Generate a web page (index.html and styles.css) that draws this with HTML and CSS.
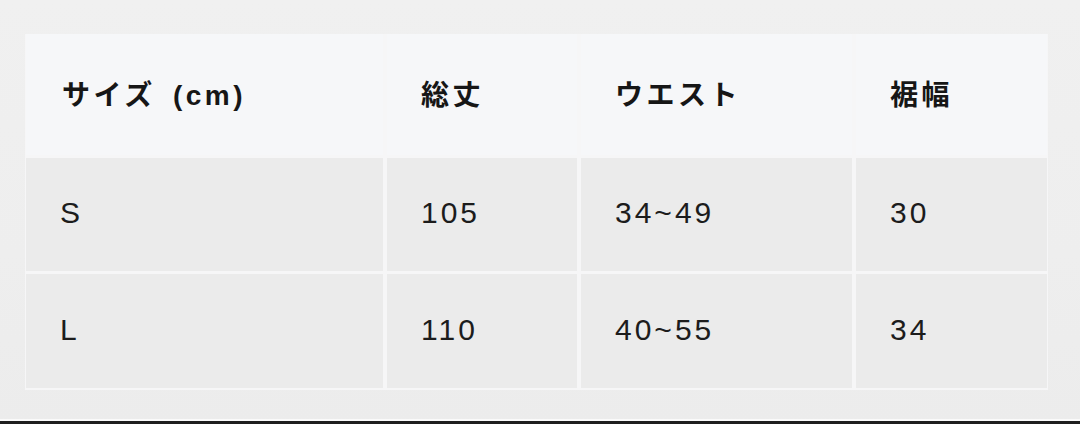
FILE: index.html
```html
<!DOCTYPE html>
<html lang="ja">
<head>
<meta charset="utf-8">
<link rel="stylesheet" href="styles.css">
</head>
<body>
<div class="page">
  <div class="size-table">
    <div class="cell head">サイズ (cm)</div>
    <div class="cell head">総丈</div>
    <div class="cell head">ウエスト</div>
    <div class="cell head">裾幅</div>

    <div class="cell">S</div>
    <div class="cell">105</div>
    <div class="cell">34~49</div>
    <div class="cell">30</div>

    <div class="cell">L</div>
    <div class="cell">110</div>
    <div class="cell">40~55</div>
    <div class="cell">34</div>
  </div>
</div>
<div class="bottom-edge"></div>
</body>
</html>
```

FILE: styles.css
```css
html, body {
  margin: 0;
  padding: 0;
}
body {
  width: 1080px;
  height: 424px;
  display: flex;
  flex-direction: column;
  background: linear-gradient(180deg, #f0f0f0 0%, #eeeeee 60%, #ececec 100%);
  font-family: "Liberation Sans", "Noto Sans CJK JP", sans-serif;
  color: #1b1b1b;
  overflow: hidden;
}
.page {
  padding: 34px 32px 0 25px;
}
.size-table {
  display: grid;
  grid-template-columns: 357px 190px 271px 191px;
  grid-template-rows: 121px 113px 114px;
  column-gap: 4px;
  row-gap: 3px;
  padding: 0 1px 2px 1px;
  background: #f6f6f7;
  width: 1021px;
}
.cell {
  display: flex;
  align-items: center;
  padding-left: 34px;
  padding-bottom: 3px;
  background: #ebebeb;
  font-size: 30px;
  letter-spacing: 3px;
  font-weight: 400;
  color: #1c1c1c;
}
.cell.head {
  background: #f6f7f9;
  font-family: "Liberation Sans", "Noto Sans CJK JP", sans-serif;
  font-weight: 700;
  font-size: 28px;
  letter-spacing: 3.5px;
  word-spacing: 6px;
  padding-bottom: 4px;
  padding-left: 34px;
  color: #161616;
}
.cell.head:first-child {
  padding-left: 36px;
}
.bottom-edge {
  margin-top: auto;
  height: 3px;
  border-top: 2px solid #fafafa;
  background: #1f1f1f;
}
```
